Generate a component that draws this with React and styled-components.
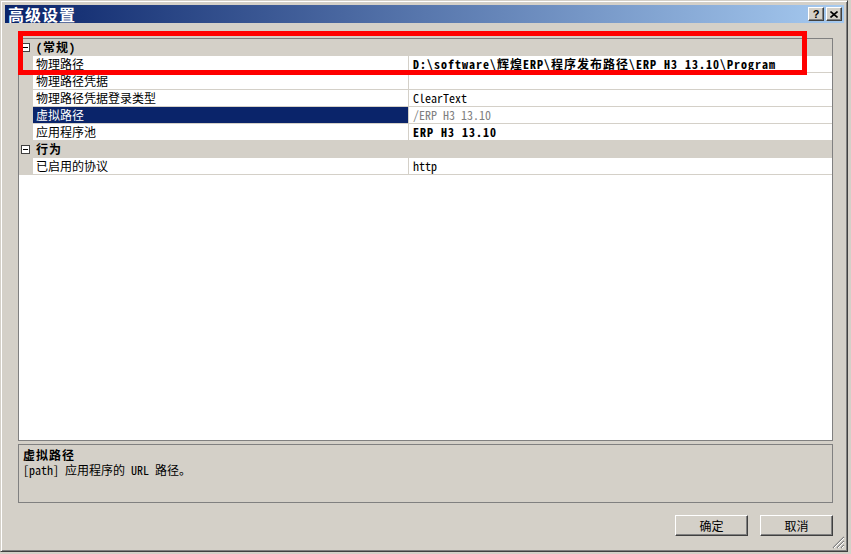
import React from "react";
import styled, { createGlobalStyle } from "styled-components";

const FONT = `"Noto Sans Mono CJK SC", "Noto Sans CJK SC", "Liberation Mono", monospace`;

const GlobalStyle = createGlobalStyle`
  html, body {
    margin: 0;
    padding: 0;
    background: #d4d0c8;
  }
  body {
    font-family: ${FONT};
    font-size: 12px;
    color: #000;
  }
`;

const Window = styled.div`
  position: relative;
  box-sizing: border-box;
  width: 848px;
  height: 552px;
  background: #d4d0c8;
  border: 1px solid;
  border-color: #d4d0c8 #404040 #404040 #d4d0c8;
  box-shadow: inset 1px 1px #fff, inset -1px -1px #808080;
  padding: 4px 3px 3px 4px;
  display: flex;
  flex-direction: column;
`;

const TitleBar = styled.div`
  height: 18px;
  display: flex;
  align-items: center;
  justify-content: space-between;
  padding: 0 2px 0 3px;
  background: linear-gradient(to right, #0a246a, #a6caf0);
`;

const Title = styled.span`
  color: #fff;
  font-size: 16px;
  font-weight: bold;
  letter-spacing: 1px;
  line-height: 18px;
`;

const Caption = styled.div`
  display: flex;
  gap: 2px;
`;

const CaptionButton = styled.div`
  box-sizing: border-box;
  width: 16px;
  height: 14px;
  background: #d4d0c8;
  border: 1px solid;
  border-color: #fff #404040 #404040 #fff;
  box-shadow: inset -1px -1px #808080;
  display: flex;
  align-items: center;
  justify-content: center;
  font-family: "Liberation Sans", sans-serif;
  font-weight: bold;
  font-size: 11px;
  line-height: 1;
`;

const Body = styled.div`
  flex: 1;
  display: flex;
  flex-direction: column;
  padding: 15px 0 0 13px;
`;

const Grid = styled.div`
  box-sizing: border-box;
  width: 815px;
  height: 403px;
  border: 1px solid #808080;
  background: #fff;
`;

const Row = styled.div`
  display: grid;
  grid-template-columns: 14px 376px 1fr;
  height: 17px;
  background: ${(p) => (p.$category ? "#d4d0c8" : "#fff")};
`;

const Gutter = styled.div`
  background: #d4d0c8;
  display: flex;
  align-items: center;
  padding-left: 2px;
`;

const Expander = styled.div`
  position: relative;
  box-sizing: border-box;
  width: 9px;
  height: 9px;
  border: 1px solid #404040;
  background: #fff;
  &::after {
    content: "";
    position: absolute;
    left: 1px;
    right: 1px;
    top: 3px;
    height: 1px;
    background: #000;
  }
`;

const CategoryName = styled.div`
  grid-column: 2 / 4;
  font-weight: bold;
  letter-spacing: 1px;
  line-height: 16px;
  padding-left: 3px;
`;

const NameCell = styled.div`
  box-sizing: border-box;
  height: 17px;
  border-bottom: 1px solid #d4d0c8;
  border-right: 1px solid #d4d0c8;
  padding-left: 3px;
  line-height: 16px;
  white-space: nowrap;
  background: ${(p) => (p.$selected ? "#0a246a" : "#fff")};
  color: ${(p) => (p.$selected ? "#fff" : "#000")};
`;

const ValueCell = styled.div`
  box-sizing: border-box;
  height: 17px;
  border-bottom: 1px solid #d4d0c8;
  padding-left: 4px;
  line-height: 16px;
  white-space: nowrap;
  overflow: hidden;
  font-weight: ${(p) => (p.$bold ? "bold" : "normal")};
  letter-spacing: ${(p) => (p.$bold ? "1px" : "0")};
  color: ${(p) => (p.$readonly ? "#808080" : "#000")};
`;

const Description = styled.div`
  box-sizing: border-box;
  width: 815px;
  height: 59px;
  margin-top: 3px;
  border: 1px solid #808080;
  padding: 2px 4px;
  line-height: 15px;
`;

const DescTitle = styled.div`
  font-weight: bold;
  letter-spacing: 1px;
`;

const Footer = styled.div`
  width: 815px;
  display: flex;
  justify-content: flex-end;
  gap: 12px;
  margin-top: 12px;
`;

const Button = styled.button`
  box-sizing: border-box;
  width: 73px;
  height: 21px;
  padding: 0;
  background: #d4d0c8;
  border: 1px solid;
  border-color: #fff #404040 #404040 #fff;
  box-shadow: inset -1px -1px #808080;
  font-family: ${FONT};
  font-size: 12px;
  color: #000;
`;

const Highlight = styled.div`
  position: absolute;
  left: 17px;
  top: 30px;
  width: 789px;
  height: 44px;
  box-sizing: border-box;
  border: 5px solid #ff0000;
  pointer-events: none;
`;

const Grip = styled.svg`
  position: absolute;
  right: 2px;
  bottom: 2px;
`;

const sections = [
  {
    name: "(常规)",
    rows: [
      { name: "物理路径", value: "D:\\software\\辉煌ERP\\程序发布路径\\ERP H3 13.10\\Program", bold: true },
      { name: "物理路径凭据", value: "" },
      { name: "物理路径凭据登录类型", value: "ClearText" },
      { name: "虚拟路径", value: "/ERP H3 13.10", selected: true, readonly: true },
      { name: "应用程序池", value: "ERP H3 13.10", bold: true },
    ],
  },
  {
    name: "行为",
    rows: [{ name: "已启用的协议", value: "http" }],
  },
];

export default function App() {
  return (
    <>
      <GlobalStyle />
      <Window>
        <TitleBar>
          <Title>高级设置</Title>
          <Caption>
            <CaptionButton>?</CaptionButton>
            <CaptionButton>
              <svg width="8" height="7" viewBox="0 0 8 7">
                <path d="M0.5 0.5 L7.5 6.5 M7.5 0.5 L0.5 6.5" stroke="#000" strokeWidth="1.6" />
              </svg>
            </CaptionButton>
          </Caption>
        </TitleBar>
        <Body>
          <Grid>
            {sections.map((s) => (
              <React.Fragment key={s.name}>
                <Row $category>
                  <Gutter>
                    <Expander />
                  </Gutter>
                  <CategoryName>{s.name}</CategoryName>
                </Row>
                {s.rows.map((r) => (
                  <Row key={r.name}>
                    <Gutter />
                    <NameCell $selected={r.selected}>{r.name}</NameCell>
                    <ValueCell $bold={r.bold} $readonly={r.readonly}>
                      {r.value}
                    </ValueCell>
                  </Row>
                ))}
              </React.Fragment>
            ))}
          </Grid>
          <Description>
            <DescTitle>虚拟路径</DescTitle>
            <div>[path] 应用程序的 URL 路径。</div>
          </Description>
          <Footer>
            <Button>确定</Button>
            <Button>取消</Button>
          </Footer>
        </Body>
        <Highlight />
        <Grip width="13" height="13" viewBox="0 0 13 13">
          <path d="M12 1 L1 12 M12 5 L5 12 M12 9 L9 12" stroke="#808080" strokeWidth="1.2" />
          <path d="M12 2 L2 12 M12 6 L6 12 M12 10 L10 12" stroke="#fff" strokeWidth="1" />
        </Grip>
      </Window>
    </>
  );
}
